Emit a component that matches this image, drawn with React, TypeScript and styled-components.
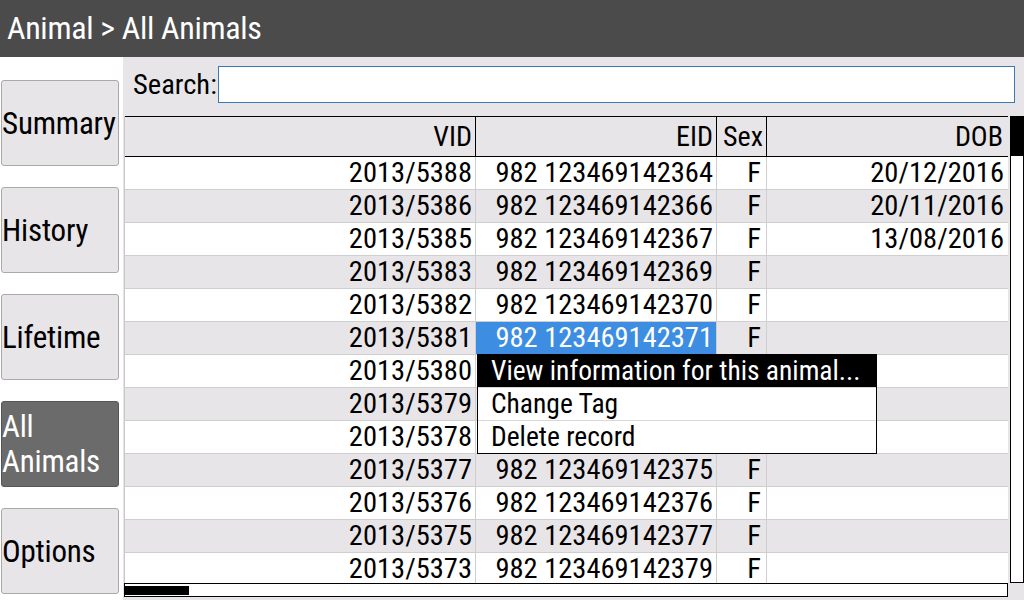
import styled, { createGlobalStyle } from "styled-components";

const Global = createGlobalStyle`
  html, body {
    margin: 0;
    padding: 0;
    background: #ffffff;
  }
  * {
    box-sizing: border-box;
  }
`;

const Screen = styled.div`
  width: 1024px;
  height: 600px;
  overflow: hidden;
  font-family: Roboto, "Liberation Sans", sans-serif;
  font-stretch: condensed;
  display: flex;
  flex-direction: column;
  background: #ffffff;
`;

const TitleBar = styled.div`
  height: 57px;
  flex: none;
  background: #4b4b4b;
  color: #ffffff;
  font-size: 32px;
  line-height: 57px;
  padding-left: 7px;
  letter-spacing: -0.3px;
`;

const Body = styled.div`
  flex: 1;
  display: flex;
  min-height: 0;
`;

const Sidebar = styled.div`
  width: 123px;
  flex: none;
  display: flex;
  flex-direction: column;
  gap: 21px;
  padding: 23px 0 0 1px;
`;

type NavProps = { active?: boolean };
const NavButton = styled.div<NavProps>`
  width: 118px;
  height: 86px;
  border: 1px solid ${(p) => (p.active ? "#555555" : "#a9a9a9")};
  border-radius: 3px;
  background: ${(p) => (p.active ? "#6b6b6b" : "#e8e5e8")};
  color: ${(p) => (p.active ? "#ffffff" : "#000000")};
  font-size: 31px;
  line-height: 35px;
  display: flex;
  align-items: center;
  padding-left: 0;
  letter-spacing: -0.2px;
`;

const Main = styled.div`
  flex: 1;
  background: #e8e5e8;
  display: flex;
  flex-direction: column;
  min-width: 0;
`;

const SearchRow = styled.div`
  height: 55px;
  flex: none;
  display: flex;
  align-items: center;
  padding: 0 9px 0 10px;
  gap: 1px;
`;

const SearchLabel = styled.span`
  font-size: 28.5px;
  color: #000000;
`;

const SearchInput = styled.div`
  flex: 1;
  height: 37px;
  background: #ffffff;
  border: 1px solid #3b78b8;
`;

const TableArea = styled.div`
  margin-top: 4px;
  display: grid;
  grid-template-columns: 884px 14px;
  grid-template-rows: 467px 14px;
  column-gap: 2px;
  padding-left: 1px;
`;

const Table = styled.div`
  position: relative;
  background: #ffffff;
  border-left: 1px solid #c8c8c8;
  overflow: hidden;
`;

const cols = "351px 241px 50px 241px";

const HeaderRow = styled.div`
  display: grid;
  grid-template-columns: ${cols};
  height: 41px;
  background: #e8e5e8;
  border-top: 1px solid #000000;
  border-bottom: 1px solid #000000;
`;

const HeadCell = styled.div`
  font-size: 28px;
  line-height: 39px;
  text-align: right;
  padding-right: 3px;
  border-right: 1px solid #000000;
  &:last-child {
    border-right: none;
    padding-right: 5px;
  }
`;

type RowProps = { shaded: boolean };
const Row = styled.div<RowProps>`
  display: grid;
  grid-template-columns: ${cols};
  height: 33px;
  background: ${(p) => (p.shaded ? "#e8e5e8" : "#ffffff")};
  border-bottom: 1px solid #cfcfcf;
`;

type CellProps = { selected?: boolean; pad?: number };
const Cell = styled.div<CellProps>`
  font-size: 28.5px;
  line-height: 32px;
  text-align: right;
  padding-right: ${(p) => p.pad ?? 4}px;
  border-right: 1px solid #cfcfcf;
  white-space: nowrap;
  background: ${(p) => (p.selected ? "#3d8de3" : "transparent")};
  color: ${(p) => (p.selected ? "#ffffff" : "#000000")};
  &:last-child {
    border-right: none;
  }
`;

const Menu = styled.div`
  position: absolute;
  left: 352px;
  top: 238px;
  width: 400px;
  background: #ffffff;
  border: 1px solid #000000;
`;

type MenuItemProps = { highlighted?: boolean };
const MenuItem = styled.div<MenuItemProps>`
  height: 33px;
  font-size: 27.5px;
  line-height: 32px;
  padding-left: 13px;
  white-space: nowrap;
  background: ${(p) => (p.highlighted ? "#000000" : "#ffffff")};
  color: ${(p) => (p.highlighted ? "#ffffff" : "#000000")};
  border-bottom: 1px solid #d8d8d8;
  &:last-child {
    border-bottom: none;
    height: 32px;
  }
`;

const VScroll = styled.div`
  border: 1px solid #000000;
  background: #ffffff;
`;

const VThumb = styled.div`
  height: 39px;
  background: #000000;
`;

const HScroll = styled.div`
  border: 1px solid #000000;
  background: #ffffff;
  padding: 2px 0 1px 0;
`;

const HThumb = styled.div`
  width: 64px;
  height: 100%;
  background: #000000;
`;

const animals = [
  { vid: "2013/5388", eid: "982 123469142364", dob: "20/12/2016" },
  { vid: "2013/5386", eid: "982 123469142366", dob: "20/11/2016" },
  { vid: "2013/5385", eid: "982 123469142367", dob: "13/08/2016" },
  { vid: "2013/5383", eid: "982 123469142369", dob: "" },
  { vid: "2013/5382", eid: "982 123469142370", dob: "" },
  { vid: "2013/5381", eid: "982 123469142371", dob: "" },
  { vid: "2013/5380", eid: "982 123469142372", dob: "" },
  { vid: "2013/5379", eid: "982 123469142373", dob: "" },
  { vid: "2013/5378", eid: "982 123469142374", dob: "" },
  { vid: "2013/5377", eid: "982 123469142375", dob: "" },
  { vid: "2013/5376", eid: "982 123469142376", dob: "" },
  { vid: "2013/5375", eid: "982 123469142377", dob: "" },
  { vid: "2013/5373", eid: "982 123469142379", dob: "" },
];

const navItems = ["Summary", "History", "Lifetime", "All Animals", "Options"];

export default function App() {
  return (
    <Screen>
      <Global />
      <TitleBar>Animal &gt; All Animals</TitleBar>
      <Body>
        <Sidebar>
          {navItems.map((n) => (
            <NavButton key={n} active={n === "All Animals"}>
              {n === "All Animals" ? (
                <span>
                  All
                  <br />
                  Animals
                </span>
              ) : (
                n
              )}
            </NavButton>
          ))}
        </Sidebar>
        <Main>
          <SearchRow>
            <SearchLabel>Search:</SearchLabel>
            <SearchInput />
          </SearchRow>
          <TableArea>
            <Table>
              <HeaderRow>
                <HeadCell>VID</HeadCell>
                <HeadCell>EID</HeadCell>
                <HeadCell>Sex</HeadCell>
                <HeadCell>DOB</HeadCell>
              </HeaderRow>
              {animals.map((a, i) => (
                <Row key={a.vid} shaded={i % 2 === 1}>
                  <Cell pad={3}>{a.vid}</Cell>
                  <Cell pad={3} selected={i === 5}>
                    {a.eid}
                  </Cell>
                  <Cell pad={5}>F</Cell>
                  <Cell pad={4}>{a.dob}</Cell>
                </Row>
              ))}
              <Menu>
                <MenuItem highlighted>View information for this animal...</MenuItem>
                <MenuItem>Change Tag</MenuItem>
                <MenuItem>Delete record</MenuItem>
              </Menu>
            </Table>
            <VScroll>
              <VThumb />
            </VScroll>
            <HScroll>
              <HThumb />
            </HScroll>
          </TableArea>
        </Main>
      </Body>
    </Screen>
  );
}
